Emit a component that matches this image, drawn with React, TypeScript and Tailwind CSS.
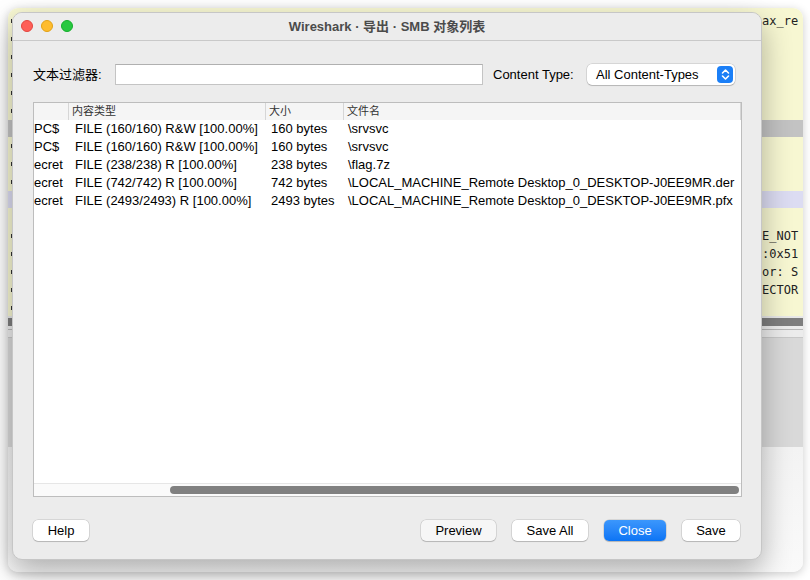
import { ReactNode } from "react"

const ui = { fontFamily: '"Liberation Sans", "Noto Sans CJK SC", sans-serif' }
const mono = { fontFamily: '"DejaVu Sans Mono", monospace' }

const rows = [
  { share: "PC$", type: "FILE (160/160) R&W [100.00%]", size: "160 bytes", name: "\\srvsvc" },
  { share: "PC$", type: "FILE (160/160) R&W [100.00%]", size: "160 bytes", name: "\\srvsvc" },
  { share: "ecret", type: "FILE (238/238) R [100.00%]", size: "238 bytes", name: "\\flag.7z" },
  { share: "ecret", type: "FILE (742/742) R [100.00%]", size: "742 bytes", name: "\\LOCAL_MACHINE_Remote Desktop_0_DESKTOP-J0EE9MR.der" },
  { share: "ecret", type: "FILE (2493/2493) R [100.00%]", size: "2493 bytes", name: "\\LOCAL_MACHINE_Remote Desktop_0_DESKTOP-J0EE9MR.pfx" },
]

// clipped line ends of the packet list, left edge of the main window
const Ticks = ({ n }: { n: number }) => (
  <div className="flex flex-col items-end">
    {Array.from({ length: n }).map((_, i) => (
      <div key={i} className="h-[18px] flex items-center">
        <div className="w-[1px] h-[4px] bg-[#333]" />
      </div>
    ))}
  </div>
)

// bands of the Wireshark main window peeking out behind the dialog
const Bands = ({ right, left }: { right?: boolean; left?: boolean }) => (
  <div className="flex flex-col h-full text-[12px] text-[#222]" style={mono}>
    <div className="h-[112px] bg-[#f7f7d2] pt-[4px] leading-[18px] whitespace-nowrap overflow-hidden">
      {right && "ax_re"}
      {left && <Ticks n={6} />}
    </div>
    <div className="h-[17px] bg-[#c3c3c3]" />
    <div className="h-[54px] bg-[#f7f7d2] overflow-hidden">{left && <Ticks n={3} />}</div>
    <div className="h-[17px] bg-[#dcdcf2]" />
    <div className="h-[108px] bg-[#f7f7d2] pt-[19px] leading-[18px] whitespace-nowrap overflow-hidden">
      {right && (
        <>
          <div>E_NOT</div>
          <div>:0x51</div>
          <div>or: S</div>
          <div>ECTOR</div>
        </>
      )}
      {left && <Ticks n={5} />}
    </div>
    <div className="h-[2px] bg-[#e8e8e8]" />
    <div className="h-[8px] bg-[#7e7e7e]" />
    <div className="h-[121px] bg-[#d9d9d9] flex flex-col">
      <div className="h-[4px] bg-[#ececec] border-b border-[#b8b8b8]" />
      <div className="h-[8px] bg-[#ececec] border-b border-[#c8c8c8]" />
    </div>
    <div className="flex-1 bg-gradient-to-b from-[#f3f3f3] to-[#fafafa]" />
  </div>
)

const Btn = ({ children, w, blue, muted }: { children: ReactNode; w: string; blue?: boolean; muted?: boolean }) => (
  <button
    className={[
      "h-[21px] rounded-[5px] text-[13px] leading-[21px] text-center shadow-[0_0_0_0.5px_rgba(0,0,0,0.18),0_1px_1px_rgba(0,0,0,0.15)]",
      w,
      blue
        ? "bg-gradient-to-b from-[#3b97fc] to-[#0a74f5] text-white"
        : muted
          ? "bg-[#f6f6f6] text-black"
          : "bg-white text-black",
    ].join(" ")}
    style={ui}
  >
    {children}
  </button>
)

export default function App() {
  return (
    <div className="relative w-[810px] h-[580px] bg-white overflow-hidden" style={ui}>
      {/* main window behind */}
      <div className="absolute left-[8px] top-[8px] w-[795px] h-[564px] rounded-[10px] overflow-hidden shadow-[0_2px_10px_rgba(0,0,0,0.2)] flex">
        <div className="w-[4px] shrink-0">
          <Bands left />
        </div>
        <div className="w-[750px] shrink-0">
          <Bands />
        </div>
        <div className="flex-1 min-w-0">
          <Bands right />
        </div>
      </div>

      {/* dialog */}
      <div className="absolute left-[12px] top-[12px] w-[750px] h-[548px] rounded-[10px] bg-[#ececec] border border-[#c6c6c6] shadow-[0_12px_30px_rgba(0,0,0,0.3)] flex flex-col overflow-hidden">
        {/* title bar */}
        <div className="relative h-[28px] shrink-0 border-b border-[#c9c9c9] flex items-center justify-center bg-[#ececec]">
          <div className="absolute left-[8px] top-[7px] flex gap-[8px]">
            <div className="w-[12px] h-[12px] rounded-full bg-[#fe5f57] border border-[#e2463f]" />
            <div className="w-[12px] h-[12px] rounded-full bg-[#febc2e] border border-[#e1a116]" />
            <div className="w-[12px] h-[12px] rounded-full bg-[#28c840] border border-[#14ae2a]" />
          </div>
          <span className="text-[13px] font-bold text-[#4b4b4b]">Wireshark · 导出 · SMB 对象列表</span>
        </div>

        <div className="flex-1 flex flex-col px-[20px] pt-[23px] pb-[18px]">
          {/* filter row */}
          <div className="flex items-center h-[21px] text-[13px] text-black">
            <span className="w-[82px] shrink-0">文本过滤器:</span>
            <div className="w-[368px] h-[21px] bg-white border border-[#c4c4c4] border-t-[#b0b0b0]" />
            <span className="ml-[10px] w-[94px] shrink-0">Content Type:</span>
            <div className="w-[148px] h-[21px] rounded-[5px] bg-white shadow-[0_0_0_0.5px_rgba(0,0,0,0.18),0_1px_1px_rgba(0,0,0,0.15)] flex items-center pl-[9px] pr-[2px]">
              <span className="flex-1">All Content-Types</span>
              <div className="w-[16px] h-[17px] rounded-[4px] bg-[#1b7ff7] flex items-center justify-center">
                <svg width="9" height="13" viewBox="0 0 9 13" fill="none" stroke="white" strokeWidth="1.6" strokeLinecap="round" strokeLinejoin="round">
                  <path d="M1.5 5 L4.5 2 L7.5 5" />
                  <path d="M1.5 8 L4.5 11 L7.5 8" />
                </svg>
              </div>
            </div>
          </div>

          {/* table */}
          <div className="mt-[17px] w-[709px] flex-1 bg-white border border-[#bdbdbd] flex flex-col">
            <div className="h-[17px] bg-[#f5f5f5] flex text-[11px] text-[#333] leading-[17px]">
              <div className="w-[35px] border-r border-[#d6d6d6]" />
              <div className="w-[197px] border-r border-[#d6d6d6] pl-[3px]">内容类型</div>
              <div className="w-[78px] border-r border-[#d6d6d6] pl-[3px]">大小</div>
              <div className="w-[397px] border-r border-[#d6d6d6] pl-[3px]">文件名</div>
            </div>
            <div className="flex-1">
              {rows.map((r, i) => (
                <div key={i} className="h-[18px] flex text-[13px] leading-[18px] text-black whitespace-nowrap">
                  <div className="w-[35px] overflow-hidden">{r.share}</div>
                  <div className="w-[197px] pl-[6px]">{r.type}</div>
                  <div className="w-[78px] pl-[5px]">{r.size}</div>
                  <div className="pl-[4px]">{r.name}</div>
                </div>
              ))}
            </div>
            <div className="h-[13px] bg-[#fafafa] border-t border-[#e6e6e6] flex items-center">
              <div className="ml-[136px] mr-[2px] flex-1 h-[8px] rounded-full bg-[#808080]" />
            </div>
          </div>

          {/* buttons */}
          <div className="mt-[23px] flex items-center">
            <Btn w="w-[56px]">Help</Btn>
            <div className="flex-1" />
            <div className="flex gap-[16px] pr-[1px]">
              <Btn w="w-[75px]" muted>Preview</Btn>
              <Btn w="w-[76px]">Save All</Btn>
              <Btn w="w-[62px]" blue>Close</Btn>
              <Btn w="w-[58px]">Save</Btn>
            </div>
          </div>
        </div>
      </div>
    </div>
  )
}
